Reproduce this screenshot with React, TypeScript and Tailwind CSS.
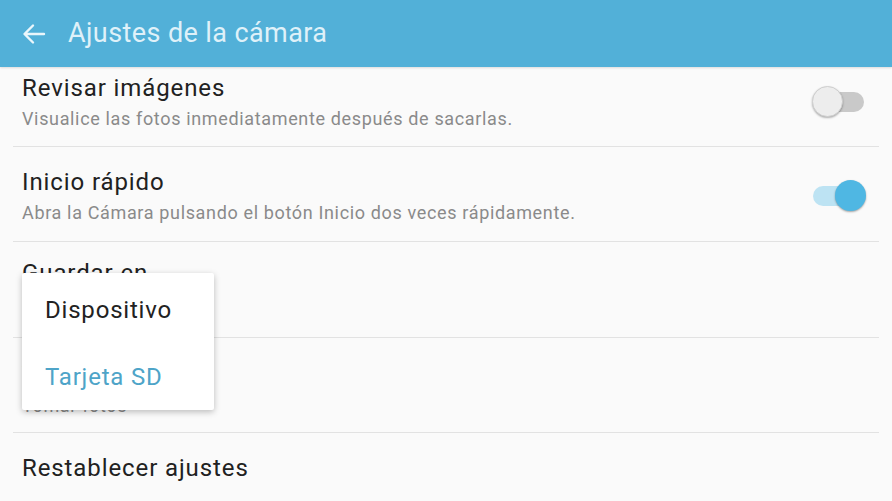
import React from "react";

const font = { fontFamily: "Roboto, 'Noto Sans', sans-serif" };

const Toggle = ({ on }: { on: boolean }) => {
  return (
    <div className="relative w-[54px] h-[32px] flex items-center">
      <div
        className={
          on
            ? "absolute left-[1px] w-[44px] h-[20px] rounded-full bg-[#bde3f3]"
            : "absolute left-[14px] w-[38px] h-[20px] rounded-full bg-[#c9c9c9]"
        }
      />
      {on ? (
        <div className="absolute left-[23px] w-[31px] h-[31px] rounded-full bg-[#4fb7e3] shadow-[0_1px_2px_rgba(0,0,0,0.35)]" />
      ) : (
        <div className="absolute left-[0px] w-[31px] h-[31px] rounded-full bg-[#ededed] border border-[#cfcfcf] shadow-[0_1px_2px_rgba(0,0,0,0.3)]" />
      )}
    </div>
  );
};

const Row = ({
  title,
  sub,
  toggle,
  pt,
  pb,
  subColor,
}: {
  title: string;
  sub?: string;
  toggle?: boolean;
  pt: string;
  pb: string;
  subColor?: string;
}) => {
  return (
    <div className={`flex items-center justify-between border-b border-[#e2e2e2] pl-[9px] pr-[13px] ${pt} ${pb}`}>
      <div className="flex flex-col">
        <div className="text-[24px] leading-[30px] tracking-[0.9px] text-[#212121]">{title}</div>
        {sub && (
          <div className={`mt-[5px] text-[18px] leading-[22px] tracking-[0.65px] ${subColor ?? "text-[#8a8a8a]"}`}>{sub}</div>
        )}
      </div>
      {toggle !== undefined && <Toggle on={toggle} />}
    </div>
  );
};

export default function App() {
  return (
    <div className="relative w-[892px] h-[501px] overflow-hidden bg-[#fafafa]" style={font}>
      <div className="h-[67px] bg-[#52b0d8] flex items-center shadow-[0_1px_2px_rgba(0,0,0,0.12)] relative z-10">
        <svg className="ml-[22px]" width="24" height="24" viewBox="0 0 24 24" fill="none">
          <path d="M22 12H3M11 3.5L2.5 12L11 20.5" stroke="#eaf6fb" strokeWidth="2.4" strokeLinecap="round" strokeLinejoin="round" />
        </svg>
        <div className="ml-[22px] text-[27px] tracking-[0.4px] text-[#dff1f9] leading-none pb-[1px]">Ajustes de la cámara</div>
      </div>

      <div className="mx-[13px] flex flex-col">
        <Row
          title="Revisar imágenes"
          sub="Visualice las fotos inmediatamente después de sacarlas."
          toggle={false}
          pt="pt-[6px]"
          pb="pb-[16px]"
        />
        <Row
          title="Inicio rápido"
          sub="Abra la Cámara pulsando el botón Inicio dos veces rápidamente."
          toggle={true}
          pt="pt-[20px]"
          pb="pb-[17px]"
        />
        <Row title="Guardar en" sub="Tarjeta SD" subColor="text-[#4aa3c9]" pt="pt-[16px]" pb="pb-[22px]" />
        <Row title="Volumen" sub="Tomar fotos" pt="pt-[22px]" pb="pb-[15px]" />
        <div className="pl-[9px] pt-[20px] text-[24px] leading-[30px] tracking-[0.9px] text-[#212121]">Restablecer ajustes</div>
      </div>

      <div className="absolute left-[22px] top-[273px] w-[192px] h-[137px] bg-white rounded-[2px] shadow-[0_2px_6px_rgba(0,0,0,0.25)] flex flex-col pt-[2px]">
        <div className="h-[69px] flex items-center pl-[23px] text-[24px] tracking-[0.8px] text-[#222222]">Dispositivo</div>
        <div className="h-[66px] flex items-center pl-[23px] text-[24px] tracking-[0.8px] text-[#4ea4c8]">Tarjeta SD</div>
      </div>
    </div>
  );
}
